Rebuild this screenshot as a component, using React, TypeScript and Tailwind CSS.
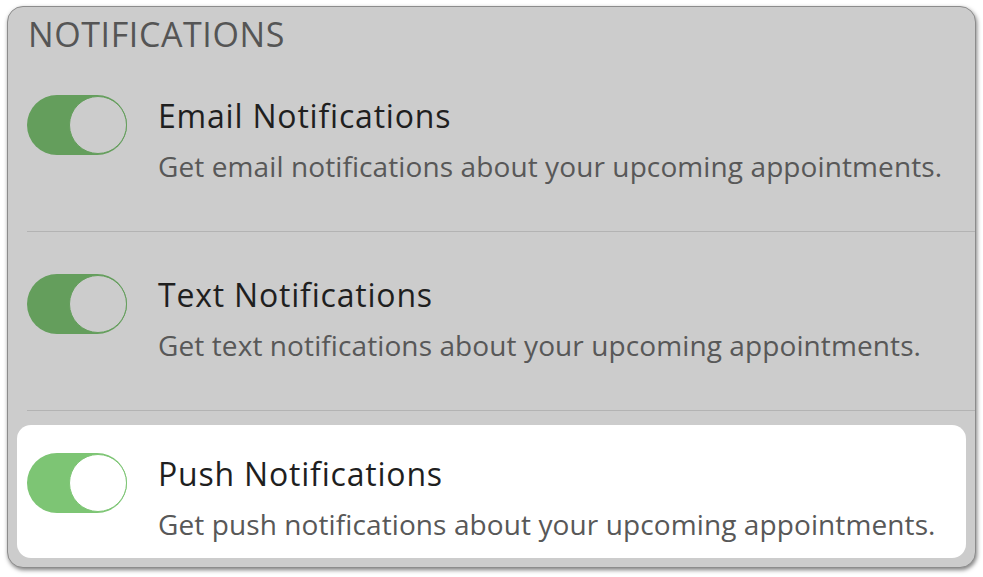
import type { ReactNode } from 'react';

interface RowProps {
    title: string;
    description: string;
    active?: boolean;
}

function Toggle({active}: {active?: boolean}) {
    return (
        <div className={`relative w-[100px] h-[60px] rounded-full shrink-0 ${active ? 'bg-[#7dc574]' : 'bg-[#649e5c]'}`}>
            <div className={`absolute right-0 top-px w-[58px] h-[58px] rounded-full border ${active ? 'bg-white border-[#7dc574]' : 'bg-[#cccccc] border-[#649e5c]'}`} />
        </div>
    );
}

function Row({title, description, active}: RowProps) {
    return (
        <div className={`h-[133px] rounded-[14px] px-[10px] pt-[28px] flex gap-[31px] ${active ? 'bg-white' : ''}`}>
            <Toggle active={active} />
            <div className="flex flex-col">
                <h3 className="text-[32px] leading-[40px] font-medium tracking-[0.8px] text-[#1f1f1f] mt-[1px] whitespace-nowrap">{title}</h3>
                <p className="text-[28px] leading-[34px] tracking-[0.1px] text-[#585858] mt-[13px] whitespace-nowrap">{description}</p>
            </div>
        </div>
    );
}

function Divider() {
    return <div className="h-px bg-[#b3b3b3] ml-[10px] mr-[-9px] mt-[31px] mb-[14px]" />;
}

function Card({children}: {children: ReactNode}) {
    return (
        <div className="w-[969px] h-[562px] rounded-[16px] bg-[#cccccc] border border-[#8c8c8c] shadow-[1px_2px_4px_rgba(0,0,0,0.5)] px-[9px] overflow-hidden">
            {children}
        </div>
    );
}

export default function App() {
    return (
        <div className="w-[983px] h-[577px] bg-white pt-[6px] pl-[7px]" style={{fontFamily: '"Open Sans", sans-serif'}}>
            <Card>
                <h2 className="text-[34px] leading-[44px] tracking-[0.6px] text-[#555555] pl-[11px] pt-[5px] h-[60px]">NOTIFICATIONS</h2>
                <Row title="Email Notifications" description="Get email notifications about your upcoming appointments." />
                <Divider />
                <Row title="Text Notifications" description="Get text notifications about your upcoming appointments." />
                <Divider />
                <Row title="Push Notifications" description="Get push notifications about your upcoming appointments." active />
            </Card>
        </div>
    );
}
